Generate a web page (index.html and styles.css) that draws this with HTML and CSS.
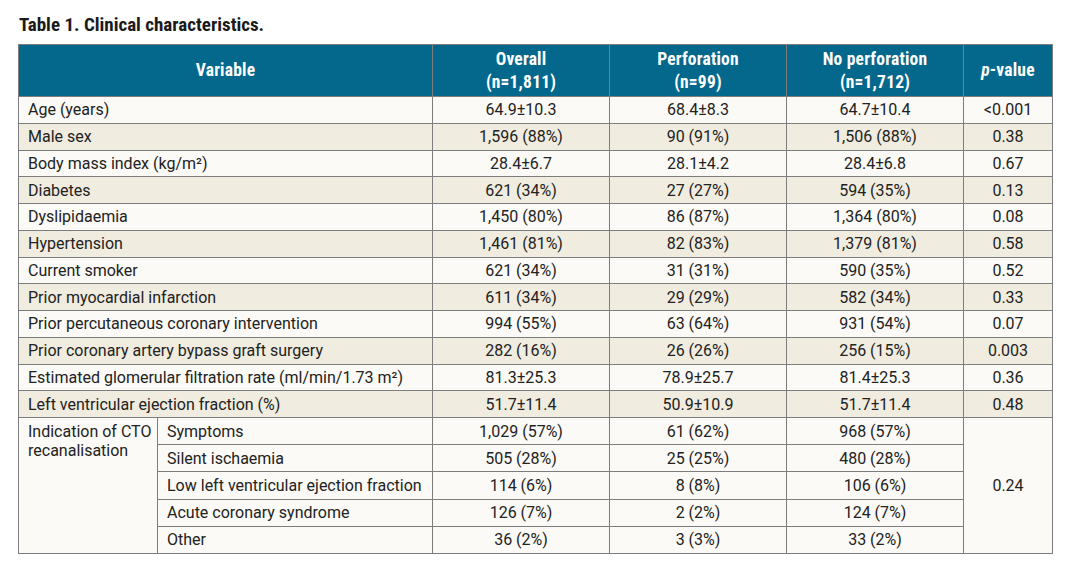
FILE: index.html
```html
<!DOCTYPE html>
<html>
<head>
<meta charset="utf-8">
<link rel="stylesheet" href="styles.css">
</head>
<body>
<div class="page">
  <h1 class="title">Table 1. Clinical characteristics.</h1>
  <table class="tbl">
    <colgroup>
      <col class="c-a"><col class="c-b"><col class="c-n"><col class="c-n"><col class="c-n"><col class="c-p">
    </colgroup>
    <thead>
      <tr class="head">
        <th colspan="2">Variable</th>
        <th>Overall<br>(n=1,811)</th>
        <th>Perforation<br>(n=99)</th>
        <th>No perforation<br>(n=1,712)</th>
        <th><i>p</i>-value</th>
      </tr>
    </thead>
    <tbody>
      <tr class="odd"><td colspan="2" class="lbl">Age (years)</td><td>64.9±10.3</td><td>68.4±8.3</td><td>64.7±10.4</td><td>&lt;0.001</td></tr>
      <tr class="even"><td colspan="2" class="lbl">Male sex</td><td>1,596 (88%)</td><td>90 (91%)</td><td>1,506 (88%)</td><td>0.38</td></tr>
      <tr class="odd"><td colspan="2" class="lbl">Body mass index (kg/m²)</td><td>28.4±6.7</td><td>28.1±4.2</td><td>28.4±6.8</td><td>0.67</td></tr>
      <tr class="even"><td colspan="2" class="lbl">Diabetes</td><td>621 (34%)</td><td>27 (27%)</td><td>594 (35%)</td><td>0.13</td></tr>
      <tr class="odd"><td colspan="2" class="lbl">Dyslipidaemia</td><td>1,450 (80%)</td><td>86 (87%)</td><td>1,364 (80%)</td><td>0.08</td></tr>
      <tr class="even"><td colspan="2" class="lbl">Hypertension</td><td>1,461 (81%)</td><td>82 (83%)</td><td>1,379 (81%)</td><td>0.58</td></tr>
      <tr class="odd"><td colspan="2" class="lbl">Current smoker</td><td>621 (34%)</td><td>31 (31%)</td><td>590 (35%)</td><td>0.52</td></tr>
      <tr class="even"><td colspan="2" class="lbl">Prior myocardial infarction</td><td>611 (34%)</td><td>29 (29%)</td><td>582 (34%)</td><td>0.33</td></tr>
      <tr class="odd"><td colspan="2" class="lbl">Prior percutaneous coronary intervention</td><td>994 (55%)</td><td>63 (64%)</td><td>931 (54%)</td><td>0.07</td></tr>
      <tr class="even"><td colspan="2" class="lbl">Prior coronary artery bypass graft surgery</td><td>282 (16%)</td><td>26 (26%)</td><td>256 (15%)</td><td>0.003</td></tr>
      <tr class="odd"><td colspan="2" class="lbl">Estimated glomerular filtration rate (ml/min/1.73 m²)</td><td>81.3±25.3</td><td>78.9±25.7</td><td>81.4±25.3</td><td>0.36</td></tr>
      <tr class="even"><td colspan="2" class="lbl">Left ventricular ejection fraction (%)</td><td>51.7±11.4</td><td>50.9±10.9</td><td>51.7±11.4</td><td>0.48</td></tr>
      <tr class="odd sub"><td rowspan="5" class="lbl group">Indication of CTO<br>recanalisation</td><td class="lbl">Symptoms</td><td>1,029 (57%)</td><td>61 (62%)</td><td>968 (57%)</td><td rowspan="5">0.24</td></tr>
      <tr class="odd sub"><td class="lbl">Silent ischaemia</td><td>505 (28%)</td><td>25 (25%)</td><td>480 (28%)</td></tr>
      <tr class="odd sub"><td class="lbl">Low left ventricular ejection fraction</td><td>114 (6%)</td><td>8 (8%)</td><td>106 (6%)</td></tr>
      <tr class="odd sub"><td class="lbl">Acute coronary syndrome</td><td>126 (7%)</td><td>2 (2%)</td><td>124 (7%)</td></tr>
      <tr class="odd sub"><td class="lbl">Other</td><td>36 (2%)</td><td>3 (3%)</td><td>33 (2%)</td></tr>
    </tbody>
  </table>
</div>
</body>
</html>
```

FILE: styles.css
```css
html, body {
  margin: 0;
  padding: 0;
  background: #ffffff;
}

.page {
  padding: 14px 0 0 18px;
}

.title {
  margin: 0 0 8px 1px;
  font-family: Roboto, "Liberation Sans", sans-serif;
  font-stretch: condensed;
  font-weight: bold;
  font-size: 19px;
  line-height: 22px;
  color: #1a1a1a;
}

.tbl {
  border-collapse: collapse;
  table-layout: fixed;
  width: 1034px;
  font-family: Roboto, "Liberation Sans", sans-serif;
  font-size: 16px;
  color: #222222;
}

.c-a { width: 139px; }
.c-b { width: 275px; }
.c-n { width: 177px; }
.c-p { width: 89px; }

.tbl th,
.tbl td {
  border: 1px solid #7d7d7d;
  padding: 0;
  text-align: center;
  vertical-align: middle;
}

.head th {
  height: 51px;
  background: #04688c;
  color: #ffffff;
  font-family: Roboto, "Liberation Sans", sans-serif;
  font-stretch: condensed;
  font-weight: bold;
  font-size: 17.5px;
  letter-spacing: 0.2px;
  line-height: 23px;
}

.head th i {
  font-style: italic;
}

.tbl tbody tr {
  height: 26.75px;
}

.tbl tbody tr.sub {
  height: 27.2px;
}

.odd td { background: #fbfaf6; }
.even td { background: #f0ecdf; }

.tbl td.lbl {
  text-align: left;
  padding-left: 9px;
  white-space: nowrap;
}

.tbl td.group {
  vertical-align: top;
  padding-top: 4px;
  line-height: 19px;
}
```
